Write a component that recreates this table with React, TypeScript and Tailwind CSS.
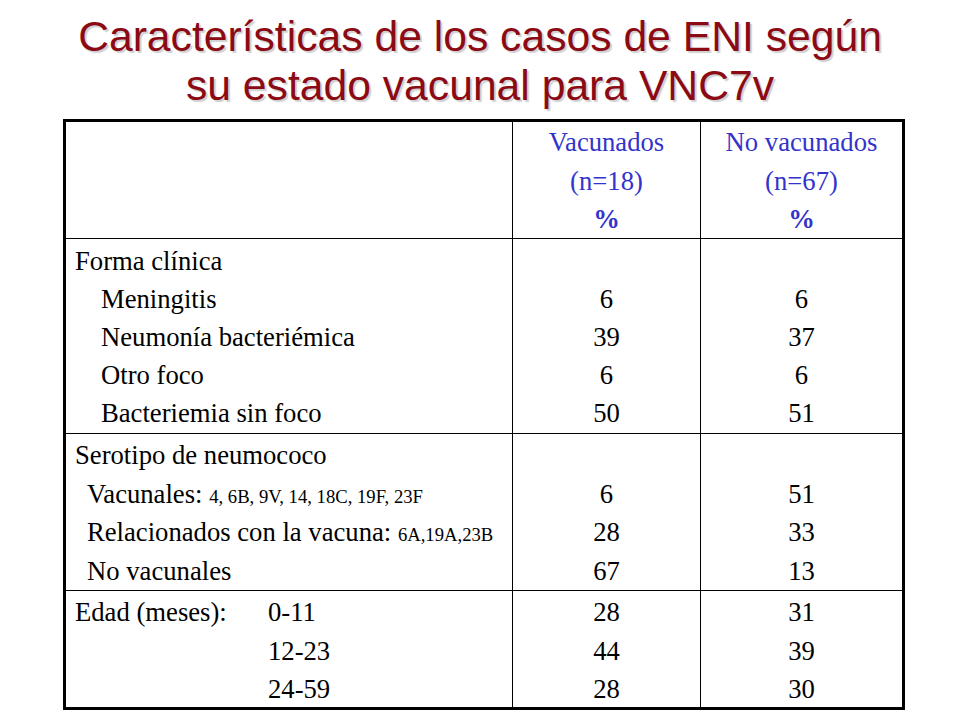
import React from "react";

const serif = "font-['Liberation_Serif','Times_New_Roman',serif]";

function Small({ children }: { children: React.ReactNode }) {
  return <span className="text-[18.67px] leading-none">{children}</span>;
}

export default function App() {
  return (
    <div className="w-[960px] h-[720px] bg-white overflow-hidden">
      <div className="h-[119px] pt-[12px] text-center font-['Liberation_Sans',Arial,sans-serif] text-[42.67px] leading-[49px] text-[#8b0a14] [text-shadow:2px_2px_1px_rgba(120,120,120,0.35)]">
        <div>Características de los casos de ENI según</div>
        <div>su estado vacunal para VNC7v</div>
      </div>
      <div className="ml-[63px] w-[842px] border-[3px] border-black bg-black">
        <div
          className={`grid grid-cols-[446px_187px_201px] grid-rows-[116px_194px_156px_116px] gap-px ${serif} text-[26.67px] text-black`}
        >
          {/* Header */}
          <div className="bg-white" />
          <div className="bg-white pt-[1px] text-center leading-[38.5px] text-[#3333cc]">
            <div>Vacunados</div>
            <div>(n=18)</div>
            <div className="font-bold">%</div>
          </div>
          <div className="bg-white pt-[1px] text-center leading-[38.5px] text-[#3333cc]">
            <div>No vacunados</div>
            <div>(n=67)</div>
            <div className="font-bold">%</div>
          </div>

          {/* Forma clínica */}
          <div className="bg-white pt-[3px] pl-[9px] leading-[38px]">
            <div>Forma clínica</div>
            <div className="pl-[26px]">
              <div>Meningitis</div>
              <div>Neumonía bacteriémica</div>
              <div>Otro foco</div>
              <div>Bacteriemia sin foco</div>
            </div>
          </div>
          <div className="bg-white pt-[3px] text-center leading-[38px]">
            <div>&nbsp;</div>
            <div>6</div>
            <div>39</div>
            <div>6</div>
            <div>50</div>
          </div>
          <div className="bg-white pt-[3px] text-center leading-[38px]">
            <div>&nbsp;</div>
            <div>6</div>
            <div>37</div>
            <div>6</div>
            <div>51</div>
          </div>

          {/* Serotipo */}
          <div className="bg-white pt-[2px] pl-[9px] leading-[38.5px] whitespace-nowrap">
            <div>Serotipo de neumococo</div>
            <div className="pl-[12px]">
              <div className="h-[38.5px]">
                Vacunales: <Small>4, 6B, 9V, 14, 18C, 19F, 23F</Small>
              </div>
              <div className="h-[38.5px]">
                Relacionados con la vacuna: <Small>6A,19A,23B</Small>
              </div>
              <div>No vacunales</div>
            </div>
          </div>
          <div className="bg-white pt-[2px] text-center leading-[38.5px]">
            <div>&nbsp;</div>
            <div>6</div>
            <div>28</div>
            <div>67</div>
          </div>
          <div className="bg-white pt-[2px] text-center leading-[38.5px]">
            <div>&nbsp;</div>
            <div>51</div>
            <div>33</div>
            <div>13</div>
          </div>

          {/* Edad */}
          <div className="bg-white pt-[2px] pl-[9px] leading-[38.5px] flex">
            <div className="w-[193px]">Edad (meses):</div>
            <div>
              <div>0-11</div>
              <div>12-23</div>
              <div>24-59</div>
            </div>
          </div>
          <div className="bg-white pt-[2px] text-center leading-[38.5px]">
            <div>28</div>
            <div>44</div>
            <div>28</div>
          </div>
          <div className="bg-white pt-[2px] text-center leading-[38.5px]">
            <div>31</div>
            <div>39</div>
            <div>30</div>
          </div>
        </div>
      </div>
    </div>
  );
}
